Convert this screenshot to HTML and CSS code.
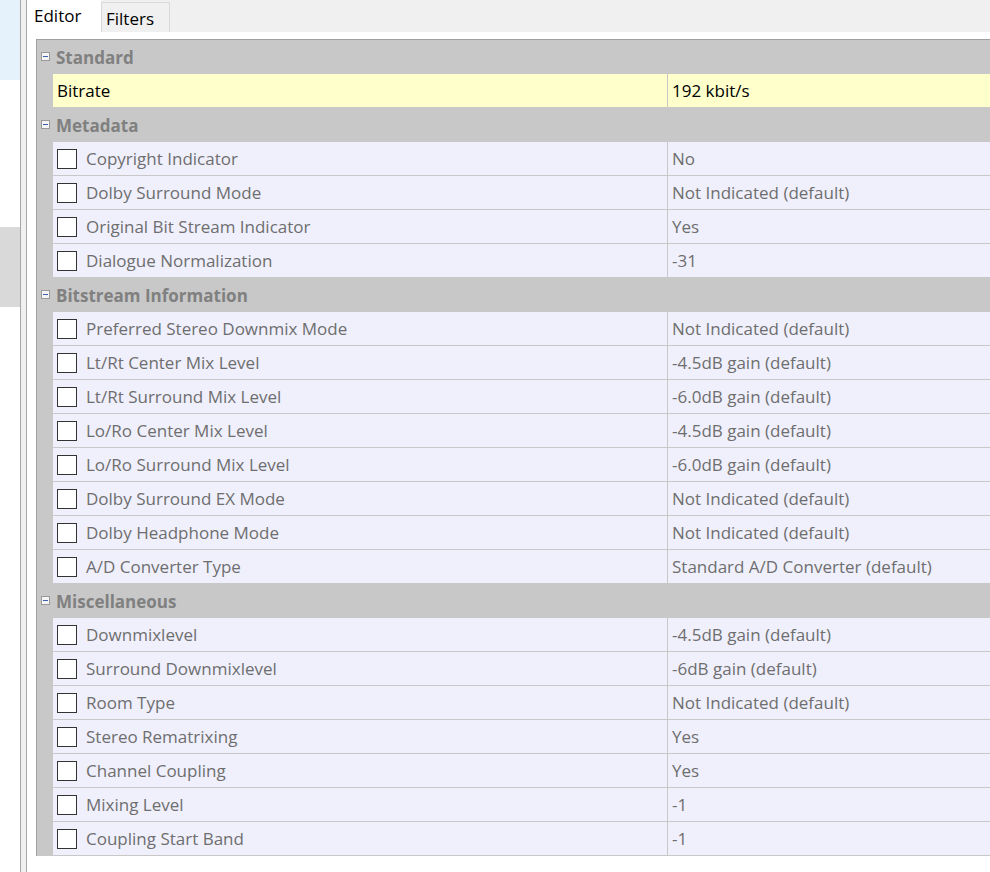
FILE: index.html
```html
<!DOCTYPE html>
<html>
<head>
<meta charset="utf-8">
<link rel="stylesheet" href="styles.css">
</head>
<body>
<div class="app">
  <div class="sidebar">
    <div class="side-sel"></div>
    <div class="side-gap"></div>
    <div class="side-gray"></div>
  </div>
  <div class="splitter"></div>
  <div class="main">
    <div class="tabs">
      <div class="tab active">Editor</div>
      <div class="tab">Filters</div>
      <div class="tab-fill"></div>
    </div>
    <div class="page">
      <div class="grid">
        <div class="cat"><span class="tog"></span><span class="cat-name">Standard</span></div>
        <div class="row sel"><div class="margin"></div><div class="label plain">Bitrate</div><div class="value">192 kbit/s</div></div>

        <div class="cat"><span class="tog"></span><span class="cat-name">Metadata</span></div>
        <div class="row"><div class="margin"></div><div class="label"><span class="cb"></span>Copyright Indicator</div><div class="value">No</div></div>
        <div class="row"><div class="margin"></div><div class="label"><span class="cb"></span>Dolby Surround Mode</div><div class="value">Not Indicated (default)</div></div>
        <div class="row"><div class="margin"></div><div class="label"><span class="cb"></span>Original Bit Stream Indicator</div><div class="value">Yes</div></div>
        <div class="row"><div class="margin"></div><div class="label"><span class="cb"></span>Dialogue Normalization</div><div class="value">-31</div></div>

        <div class="cat"><span class="tog"></span><span class="cat-name">Bitstream Information</span></div>
        <div class="row"><div class="margin"></div><div class="label"><span class="cb"></span>Preferred Stereo Downmix Mode</div><div class="value">Not Indicated (default)</div></div>
        <div class="row"><div class="margin"></div><div class="label"><span class="cb"></span>Lt/Rt Center Mix Level</div><div class="value">-4.5dB gain (default)</div></div>
        <div class="row"><div class="margin"></div><div class="label"><span class="cb"></span>Lt/Rt Surround Mix Level</div><div class="value">-6.0dB gain (default)</div></div>
        <div class="row"><div class="margin"></div><div class="label"><span class="cb"></span>Lo/Ro Center Mix Level</div><div class="value">-4.5dB gain (default)</div></div>
        <div class="row"><div class="margin"></div><div class="label"><span class="cb"></span>Lo/Ro Surround Mix Level</div><div class="value">-6.0dB gain (default)</div></div>
        <div class="row"><div class="margin"></div><div class="label"><span class="cb"></span>Dolby Surround EX Mode</div><div class="value">Not Indicated (default)</div></div>
        <div class="row"><div class="margin"></div><div class="label"><span class="cb"></span>Dolby Headphone Mode</div><div class="value">Not Indicated (default)</div></div>
        <div class="row"><div class="margin"></div><div class="label"><span class="cb"></span>A/D Converter Type</div><div class="value">Standard A/D Converter (default)</div></div>

        <div class="cat"><span class="tog"></span><span class="cat-name">Miscellaneous</span></div>
        <div class="row"><div class="margin"></div><div class="label"><span class="cb"></span>Downmixlevel</div><div class="value">-4.5dB gain (default)</div></div>
        <div class="row"><div class="margin"></div><div class="label"><span class="cb"></span>Surround Downmixlevel</div><div class="value">-6dB gain (default)</div></div>
        <div class="row"><div class="margin"></div><div class="label"><span class="cb"></span>Room Type</div><div class="value">Not Indicated (default)</div></div>
        <div class="row"><div class="margin"></div><div class="label"><span class="cb"></span>Stereo Rematrixing</div><div class="value">Yes</div></div>
        <div class="row"><div class="margin"></div><div class="label"><span class="cb"></span>Channel Coupling</div><div class="value">Yes</div></div>
        <div class="row"><div class="margin"></div><div class="label"><span class="cb"></span>Mixing Level</div><div class="value">-1</div></div>
        <div class="row"><div class="margin"></div><div class="label"><span class="cb"></span>Coupling Start Band</div><div class="value">-1</div></div>
      </div>
    </div>
  </div>
</div>
</body>
</html>
```
FILE: styles.css
```css
* { box-sizing: border-box; }
html, body { margin: 0; padding: 0; }
body {
  width: 990px;
  height: 872px;
  overflow: hidden;
  background: #ffffff;
  font-family: "Open Sans", "Noto Sans", sans-serif;
  font-size: 17px;
}
.app {
  display: flex;
  height: 872px;
}
.sidebar {
  width: 20px;
  flex: none;
  display: flex;
  flex-direction: column;
  background: #ffffff;
}
.side-sel { height: 80px; background: #e5f1fb; }
.side-gap { height: 147px; }
.side-gray { height: 80px; background: #d9d9d9; }
.splitter {
  width: 7px;
  flex: none;
  background: #f0f0f0;
  border-left: 1px solid #a8a8a8;
  border-right: 1px solid #a8a8a8;
}
.main {
  flex: 1;
  display: flex;
  flex-direction: column;
  min-width: 0;
}
.tabs {
  height: 32px;
  display: flex;
  align-items: flex-end;
  background: #f0f0f0;
  flex: none;
}
.tab {
  font-size: 17px;
  color: #000;
  line-height: 20px;
}
.tab.active {
  width: 74px;
  height: 32px;
  background: #ffffff;
  padding: 6px 0 0 7px;
}
.tab:not(.active) {
  width: 69px;
  height: 30px;
  background: #f0f0f0;
  border: 1px solid #d9d9d9;
  border-bottom: none;
  padding: 6px 0 0 4px;
}
.tab-fill { flex: 1; }
.page {
  flex: 1;
  background: #ffffff;
  padding: 7px 0 0 9px;
}
.grid {
  border-left: 1px solid #a0a0a0;
  border-top: 1px solid #a0a0a0;
  background: #c8c8c8;
  width: 960px;
}
.cat {
  height: 34px;
  display: flex;
  align-items: center;
  padding-left: 4px;
}
.tog {
  width: 9px;
  height: 9px;
  border: 1px solid #9a9a9a;
  background: #f4f4f4;
  position: relative;
  margin-right: 6px;
  margin-top: -2px;
}
.tog::after {
  content: "";
  position: absolute;
  left: 1px;
  right: 1px;
  top: 3px;
  height: 1px;
  background: #3b5fa8;
}
.cat-name {
  font-weight: 700;
  color: #808080;
}
.row {
  height: 34px;
  display: grid;
  grid-template-columns: 16px 615px 1fr;
}
.margin { background: #c8c8c8; }
.label, .value {
  background: #f0f0fd;
  border-bottom: 1px solid #c8c8c8;
  display: flex;
  align-items: center;
  color: #6e6e6e;
  white-space: nowrap;
  overflow: hidden;
}
.label { padding-left: 4px; border-right: 1px solid #c8c8c8; }
.value { padding-left: 4px; }
.row.sel .label, .row.sel .value {
  background: #ffffcc;
  color: #000;
}
.cb {
  width: 20px;
  height: 20px;
  border: 1px solid #333333;
  background: #ffffff;
  margin-right: 9px;
  flex: none;
}
```
